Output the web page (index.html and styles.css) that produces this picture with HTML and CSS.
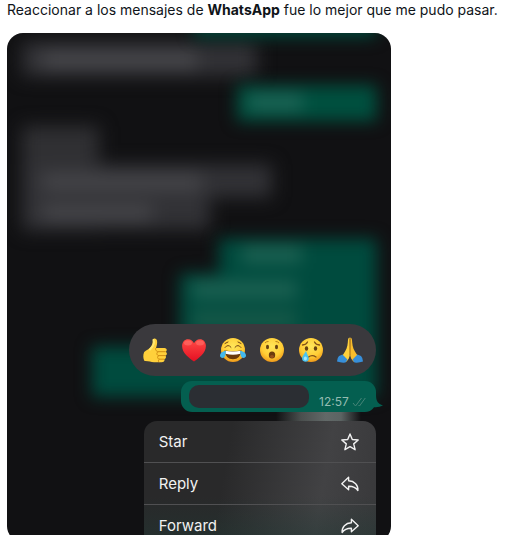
FILE: index.html
```html
<!DOCTYPE html>
<html lang="es">
<head>
<meta charset="utf-8">
<meta name="viewport" content="width=device-width, initial-scale=1">
<title>Reacciones de WhatsApp</title>
<link rel="stylesheet" href="styles.css">
</head>
<body>
<main class="post">
  <p class="post-text">Reaccionar a los mensajes de <strong>WhatsApp</strong> fue lo mejor que me pudo pasar.</p>
  <section class="chat">
    <svg class="backdrop" viewBox="0 0 384 508" preserveAspectRatio="none" aria-hidden="true">
      <g class="received">
        <rect x="15" y="9" width="235" height="34" fill="#323236"/>
        <rect x="35" y="18" width="155" height="18" fill="#48484c"/>
        <rect x="15" y="93" width="77" height="104" fill="#303033"/>
        <rect x="15" y="131" width="250" height="33" fill="#323236"/>
        <rect x="35" y="141" width="160" height="15" fill="#48484c"/>
        <rect x="15" y="160" width="188" height="36" fill="#323236"/>
        <rect x="35" y="172" width="110" height="15" fill="#48484c"/>
      </g>
      <g class="sent">
        <rect x="187" y="-20" width="182" height="24" fill="#00483b"/>
        <rect x="230" y="52" width="140" height="36" fill="#00503f"/>
        <rect x="242" y="60" width="54" height="18" fill="#1b6354"/>
        <path d="M212 205H370V363H85V313H173V240H212Z" fill="#004b3e"/>
        <rect x="235" y="212" width="60" height="18" fill="#1b6051"/>
        <rect x="185" y="247" width="105" height="18" fill="#1b6051"/>
        <rect x="185" y="277" width="105" height="18" fill="#165848"/>
      </g>
    </svg>
    <div class="focus">
      <div class="reactions" role="group" aria-label="Reacciones">
        <button class="reaction" aria-label="Me gusta"><svg viewBox="0 0 26 26">
          <path d="M2 15.5C3 13.5 7 12.500 9 9.500C10.500 7.500 10.500 5.500 11 2.500C11.500.8 14.500 1 15 3.500C15.600 6.500 14.500 9 14 11H22.500C25 11 25.500 14 23.600 14.800C25.500 15.700 25.200 18.300 23.300 18.600C24.600 19.700 24.100 21.900 22.400 22.200C23 24 21.600 25.200 19.500 25.200H12C8.500 25.200 7 23.800 2.500 24C1 22 1 17.500 2 15.500Z" fill="#ffd03b"/>
          <path d="M11.500 3C13 6 11 9.500 8 12.500" stroke="#ffe873" stroke-width="2" fill="none" stroke-linecap="round"/>
          <path d="M14 11C12.500 13 15 14.800 17 14.700H23.600M16.500 14.700C14 15.600 14.500 18.500 17 18.600H23.300M17 18.600C14.700 19.500 15.500 22.100 17.500 22.200H22.400M17.500 22.200C16 23 16.200 24.700 17.200 25.200" stroke="#d18c12" fill="none"/>
        </svg></button>
        <button class="reaction" aria-label="Me encanta"><svg viewBox="0 0 26 26">
          <path d="M13 24.500C8.500 21.500 1 16.200 1.100 8.800C1.200 5 3.800 2.300 7 2.300C10 2.300 12 4 13 6.300C14 4 16 2.300 19 2.300C22.200 2.300 24.800 5 24.900 8.800C25 16.200 17.500 21.500 13 24.500Z" fill="url(#heart)"/>
          <ellipse cx="7" cy="6" rx="4" ry="2.500" fill="#ff7770" opacity=".55"/><ellipse cx="19" cy="6" rx="4" ry="2.500" fill="#ff7770" opacity=".55"/>
          <defs><linearGradient id="heart" x2="0" y2="1"><stop stop-color="#ff4b46"/><stop offset="1" stop-color="#e40f22"/></linearGradient></defs>
        </svg></button>
        <button class="reaction" aria-label="Me divierte"><svg viewBox="0 0 26 26">
          <defs><radialGradient id="face" cy=".35" r=".65"><stop stop-color="#ffe65a"/><stop offset=".65" stop-color="#ffcd35"/><stop offset="1" stop-color="#ee991b"/></radialGradient></defs>
          <circle cx="13" cy="13" r="12" fill="url(#face)"/>
          <path d="M5 10.500Q8 6.500 11 10.300M15 10.300Q18 6.500 21 10.500M5 6.500L8 5M18 5L21 6.500" fill="none" stroke="#714414" stroke-linecap="round"/>
          <path d="M4.500 13.300Q13 15 21.500 13.300Q20.500 22.300 13 22.300Q5.500 22.300 4.500 13.300Z" fill="#69380c"/>
          <path d="M5 13.700Q13 15.300 21 13.700L20.400 16.800Q13 18.500 5.600 16.800Z" fill="#fff"/>
          <path d="M6 14C2 14 0 16.500 0 18.800C.3 21.800 4.800 21.500 5.300 18.500ZM20 14C24 14 26 16.500 26 18.800C25.700 21.800 21.200 21.500 20.700 18.500Z" fill="#43b8ed"/>
        </svg></button>
        <button class="reaction" aria-label="Me asombra"><svg viewBox="0 0 26 26">
          <circle cx="13" cy="13" r="12" fill="url(#face)"/>
          <path d="M6 6Q7.500 4.300 9.500 4.500M16.500 4.500Q18.500 4.300 20 6" stroke="#b87f1b" fill="none"/>
          <ellipse cx="8.500" cy="10" rx="1.500" ry="2.200" fill="#674211"/><ellipse cx="17.500" cy="10" rx="1.500" ry="2.200" fill="#674211"/>
          <ellipse cx="13" cy="18" rx="3.200" ry="3.500" fill="#6b3b0d"/><ellipse cx="13" cy="19.500" rx="2" ry="1.500" fill="#96501c"/>
        </svg></button>
        <button class="reaction" aria-label="Me entristece"><svg viewBox="0 0 26 26">
          <circle cx="13" cy="13" r="12" fill="url(#face)"/>
          <path d="M4.500 8Q8 7.800 9.500 5M16.500 5Q18 7.800 21.500 8M10.500 20Q14 17.300 18 20" stroke="#825016" stroke-width="1.300" fill="none" stroke-linecap="round"/>
          <ellipse cx="8.500" cy="11.500" rx="1.700" ry="2.200" fill="#674211"/><ellipse cx="17.500" cy="11.500" rx="1.700" ry="2.200" fill="#674211"/>
          <path d="M8 14C6 17 4 19.500 4.100 22C4.500 25.800 10.800 25.600 10.800 21.800C10.800 19.500 9 17 8 14Z" fill="#4bc3f0"/><ellipse cx="7.400" cy="21.500" rx="1.500" ry="2" fill="#a6eaff"/>
        </svg></button>
        <button class="reaction" aria-label="Gracias"><svg viewBox="0 0 26 26">
          <path d="M12.700.6C11 .7 11 3 10.800 5.500C10.500 10 9 13.500 6.500 17L4 20L9 25C11.500 23 12.700 20 12.900 17Z" fill="#ffd13c"/>
          <path d="M13.300.6C15 .7 15 3 15.200 5.500C15.500 10 17 13.500 19.500 17L22 20L17 25C14.500 23 13.300 20 13.100 17Z" fill="#f8bd2c"/>
          <path d="M13 2V18" stroke="#b67813"/>
          <path d="M5.500 17.500L10.500 22.500L8.500 25.500Q4 26 0 24.500Q0 21 2 19ZM20.500 17.500L15.500 22.500L17.500 25.500Q22 26 26 24.500Q26 21 24 19Z" fill="#378fda"/>
        </svg></button>
      </div>
      <div class="message">
        <span class="redacted"></span>
        <time class="time">12:57</time>
        <svg class="ticks" viewBox="0 0 14 10" aria-hidden="true"><path d="M1 6L3.500 9L9.500 1M6.500 8L7.500 9L13.300 1"/></svg>
        <svg class="tail" viewBox="0 0 10 14" aria-hidden="true"><path d="M0 0H3C3 6 5 9 10 10.500Q5 13 0 12Z" fill="#045f50"/></svg>
      </div>
      <div class="shine"></div>
      <div class="menu">
        <button class="item">Star<svg viewBox="0 0 20 20"><path d="M10 2L12.300 7.500L18.200 8L13.700 11.900L15.100 17.700L10 14.600L4.900 17.700L6.300 11.900L1.800 8L7.700 7.500Z"/></svg></button>
        <button class="item">Reply<svg viewBox="0 0 20 20"><path d="M8.600 3.300L1.800 9.700L8.600 15.700V12.300C13 12.200 15.500 13 17.900 16.500C18.300 11 14.500 7 8.600 6.800Z"/></svg></button>
        <button class="item">Forward<svg viewBox="0 0 20 20"><path d="M11.400 3.300L18.200 9.700L11.400 15.700V12.300C7 12.200 4.500 13 2.100 16.500C1.700 11 5.500 7 11.400 6.800Z"/></svg></button>
      </div>
    </div>
  </section>
</main>
</body>
</html>
```
FILE: styles.css
```css
* { box-sizing: border-box; }

html { overflow: hidden; }

body {
  margin: 0;
  background: #fff;
  color: #0f1419;
  font-family: Inter, "Liberation Sans", sans-serif;
}

.post { padding: 0 7px; }

.post-text {
  margin: 0 0 13px;
  font-size: 14px;
  line-height: 20px;
}

.post-text strong { font-weight: 700; }

.chat {
  position: relative;
  width: 78%;
  padding: 291px 15px 0;
  overflow: hidden;
  border-radius: 16px;
  background: #111113;
}

.backdrop {
  position: absolute;
  inset: 0;
  width: 100%;
  height: 100%;
}

.received { filter: blur(9px); }

.sent { filter: blur(8px); }

.focus {
  position: relative;
  display: flex;
  flex-direction: column;
  align-items: flex-end;
}

button {
  margin: 0;
  padding: 0;
  border: 0;
  background: none;
  color: inherit;
  font: inherit;
}

svg { display: block; }

.reactions {
  display: flex;
  gap: 13px;
  padding: 13px;
  border-radius: 26px;
  background: #3a393d;
}

.reaction {
  width: 26px;
  height: 26px;
}

.message {
  position: relative;
  display: flex;
  align-items: center;
  width: 195px;
  height: 31px;
  margin-top: 5px;
  padding: 0 10px 0 8px;
  border-radius: 11px;
  background: #045f50;
}

.redacted {
  flex: 1;
  height: 23px;
  margin-right: 10px;
  border-radius: 10px;
  background: #2b2e33;
}

.time {
  align-self: flex-end;
  margin-bottom: 3px;
  color: #94bcb1;
  font-size: 12px;
  line-height: 14px;
}

.ticks {
  align-self: flex-end;
  width: 14px;
  height: 10px;
  margin: 0 0 5px 3px;
  fill: none;
  stroke: #468477;
}

.tail {
  position: absolute;
  right: -7px;
  bottom: 3px;
  width: 10px;
  height: 14px;
}

.shine {
  width: 100px;
  height: 9px;
  background: linear-gradient(90deg, transparent, #4a4f4e 25%, #626968 50%, #5c6463 65%, transparent 85%);
}

.menu {
  width: 232px;
  margin-bottom: -5px;
  overflow: hidden;
  border-radius: 13px 13px 0 0;
  background:
    linear-gradient(transparent 60%, #1e393480),
    linear-gradient(100deg, #29292a 35%, #424244 75%, #38383a);
  color: #f1f1f1;
}

.item {
  display: flex;
  align-items: center;
  justify-content: space-between;
  width: 100%;
  height: 42px;
  padding: 0 16px 0 15px;
  border-bottom: 1px solid #505052;
  font-size: 15px;
}

.item svg {
  width: 20px;
  height: 20px;
  fill: none;
  stroke: #f1f1f1;
  stroke-width: 1.4;
  stroke-linejoin: round;
}
```
